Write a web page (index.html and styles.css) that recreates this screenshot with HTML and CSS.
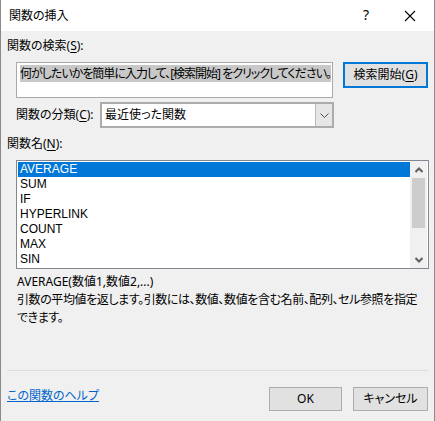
FILE: index.html
```html
<!DOCTYPE html>
<html lang="ja">
<head>
<meta charset="utf-8">
<link rel="stylesheet" href="styles.css">
</head>
<body>
<div class="dialog">
  <div class="titlebar">
    <span class="title">関数の挿入</span>
    <span class="help">?</span>
    <span class="close"><svg width="12" height="12" viewBox="0 0 12 12"><path d="M1 1L11 11M11 1L1 11" stroke="#000" stroke-width="1.1" fill="none"/></svg></span>
  </div>
  <div class="content">
    <div class="label">関数の検索(<u>S</u>):</div>
    <div class="search-row">
      <div class="search-box"><span class="sel">何がしたいかを簡単に入力して、[検索開始] をクリックしてください。</span></div>
      <div class="btn btn-default">検索開始(<u>G</u>)</div>
    </div>
    <div class="cat-row">
      <span class="cat-label">関数の分類(<u>C</u>):</span>
      <div class="select">
        <span class="select-text">最近使った関数</span>
        <span class="select-arrow"><svg width="9" height="5" viewBox="0 0 9 5"><path d="M0.5 0.5L4.5 4.5L8.5 0.5" stroke="#555" stroke-width="1" fill="none"/></svg></span>
      </div>
    </div>
    <div class="label label-names">関数名(<u>N</u>):</div>
    <div class="listbox">
      <ul class="items">
        <li class="selected">AVERAGE</li>
        <li>SUM</li>
        <li>IF</li>
        <li>HYPERLINK</li>
        <li>COUNT</li>
        <li>MAX</li>
        <li>SIN</li>
      </ul>
      <div class="scrollbar">
        <span class="arrow"><svg width="8" height="6" viewBox="0 0 8 6"><path d="M0.5 5L4 1.5L7.5 5" stroke="#606060" stroke-width="2" fill="none"/></svg></span>
        <span class="thumb"></span>
        <span class="track"></span>
        <span class="arrow"><svg width="8" height="6" viewBox="0 0 8 6"><path d="M0.5 1L4 4.5L7.5 1" stroke="#606060" stroke-width="2" fill="none"/></svg></span>
      </div>
    </div>
    <div class="syntax">AVERAGE(数値1,数値2,...)</div>
    <div class="desc">引数の平均値を返します。引数には、数値、数値を含む名前、配列、セル参照を指定できます。</div>
    <div class="spacer"></div>
    <div class="separator"></div>
    <div class="footer">
      <a class="link" href="#">この関数のヘルプ</a>
      <div class="buttons">
        <div class="btn btn-ok">OK</div>
        <div class="btn btn-cancel">キャンセル</div>
      </div>
    </div>
  </div>
</div>
</body>
</html>
```
FILE: styles.css
```css
html, body {
  margin: 0;
  padding: 0;
}
body {
  width: 435px;
  height: 421px;
  overflow: hidden;
  font-family: "Noto Sans", "Noto Sans CJK JP", sans-serif;
  font-size: 12px;
  color: #000;
  font-feature-settings: "palt";
}
.dialog {
  box-sizing: border-box;
  width: 435px;
  height: 421px;
  background: #f0f0f0;
  border-left: 1px solid #8a8a8a;
  border-right: 1px solid #8a8a8a;
  display: flex;
  flex-direction: column;
}
u {
  text-decoration: underline;
  text-underline-offset: 2px;
}
.titlebar {
  height: 31px;
  background: #fff;
  display: flex;
  align-items: center;
  padding-left: 8px;
  flex-shrink: 0;
}
.title {
  flex: 1;
  line-height: 16px;
  font-family: "Noto Sans CJK JP", sans-serif;
  margin-top: -1px;
}
.help {
  font-size: 14px;
  width: 16px;
  text-align: center;
  margin-right: 30px;
  margin-top: -2px;
}
.close {
  display: flex;
  width: 12px;
  margin-right: 18px;
}
.content {
  flex: 1;
  display: flex;
  flex-direction: column;
  padding: 0 6px 0 6px;
}
.label {
  line-height: 16px;
  margin-top: 7px;
}
.search-row {
  display: flex;
  margin-top: 8px;
  margin-left: 9px;
  gap: 10px;
  align-items: flex-start;
}
.search-box {
  box-sizing: border-box;
  width: 318px;
  height: 36px;
  background: #fff;
  border: 1px solid #a9a9a9;
  padding: 3px 1px 0 3px;
  line-height: 15px;
  white-space: nowrap;
  overflow: hidden;
}
.sel {
  background: #c8c8c8;
  letter-spacing: -1px;
}
.btn {
  box-sizing: border-box;
  background: #e1e1e1;
  border: 1px solid #adadad;
  display: flex;
  align-items: center;
  justify-content: center;
  line-height: 16px;
}
.btn-default {
  width: 85px;
  height: 26px;
  border: 2px solid #0078d7;
}
.cat-row {
  display: flex;
  align-items: center;
  margin-top: 4px;
  margin-left: 9px;
}
.cat-label {
  width: 84px;
  line-height: 16px;
}
.select {
  box-sizing: border-box;
  width: 234px;
  height: 26px;
  border: 2px solid #acacac;
  background: #fff;
  display: flex;
}
.select-text {
  flex: 1;
  line-height: 20px;
  padding-left: 3px;
  padding-top: 1px;
}
.select-arrow {
  width: 16px;
  background: #e6e6e6;
  border-left: 1px solid #bcbcbc;
  display: flex;
  align-items: center;
  justify-content: center;
}
.label-names {
  margin-top: 8px;
}
.listbox {
  box-sizing: border-box;
  margin-top: 8px;
  margin-left: 9px;
  width: 413px;
  height: 109px;
  border: 1px solid #828790;
  background: #fff;
  display: flex;
  padding: 1px 1px 1px 1px;
}
.items {
  list-style: none;
  margin: 0;
  padding: 0;
  flex: 1;
  font-family: "Liberation Sans", "Noto Sans", sans-serif;
}
.items li {
  height: 15px;
  line-height: 15px;
  padding-left: 2px;
}
.items li.selected {
  background: #0078d7;
  color: #fff;
}
.scrollbar {
  width: 17px;
  background: #f0f0f0;
  display: flex;
  flex-direction: column;
  align-items: center;
  margin-top: -1px;
  margin-bottom: -1px;
}
.arrow {
  height: 17px;
  display: flex;
  align-items: center;
  justify-content: center;
}
.thumb {
  width: 13px;
  height: 50px;
  background: #cdcdcd;
}
.track {
  flex: 1;
}
.syntax {
  margin-top: 5px;
  margin-left: 10px;
  line-height: 16px;
}
.desc {
  margin-top: 1px;
  margin-left: 10px;
  margin-right: 8px;
  line-height: 18px;
  letter-spacing: -0.4px;
}
.spacer {
  flex: 1;
}
.separator {
  height: 1px;
  background: #dcdcdc;
  margin-right: 0;
}
.footer {
  display: flex;
  align-items: flex-start;
  justify-content: space-between;
  margin-top: 16px;
  margin-bottom: 10px;
}
.link {
  color: #0066cc;
  text-decoration: underline;
  line-height: 16px;
  margin-top: 1px;
}
.buttons {
  display: flex;
  gap: 11px;
}
.btn-ok {
  width: 73px;
  height: 24px;
}
.btn-cancel {
  width: 75px;
  height: 24px;
}
```
